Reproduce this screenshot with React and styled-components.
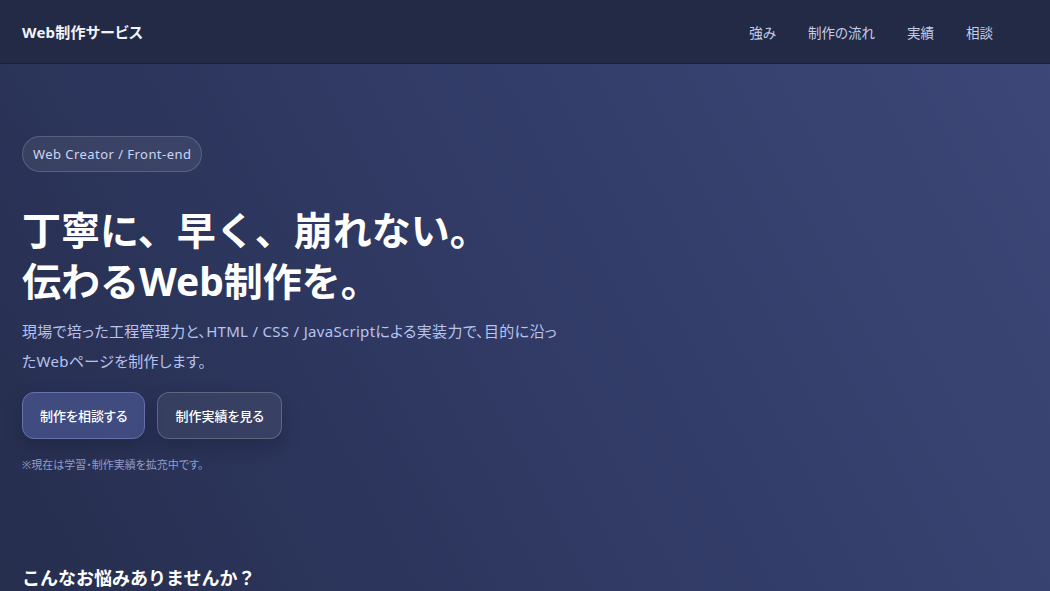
import React from "react";
import styled, { createGlobalStyle } from "styled-components";

const Global = createGlobalStyle`
  * { box-sizing: border-box; }
  html, body { margin: 0; padding: 0; }
  body {
    font-family: "Noto Sans", "Noto Sans CJK JP", sans-serif;
    font-feature-settings: "palt";
    color: #fff;
    background: #2f3862;
    overflow: hidden;
  }
`;

const Page = styled.div`
  min-height: 591px;
  background: linear-gradient(62deg, #262e4e 0%, #313b66 50%, #3d4879 100%);
`;

const Header = styled.header`
  height: 64px;
  display: flex;
  align-items: center;
  justify-content: space-between;
  padding: 0 57px 0 22px;
  background: #222a46;
  border-bottom: 1px solid rgba(0, 0, 0, 0.18);
`;

const Logo = styled.div`
  font-size: 15px;
  font-weight: 700;
  color: #f2f4fb;
  letter-spacing: 0.2px;
`;

const Nav = styled.nav`
  display: flex;
  gap: 32px;
`;

const NavLink = styled.a`
  font-size: 13.5px;
  color: #c6cde6;
  text-decoration: none;
`;

const Hero = styled.section`
  padding: 72px 22px 0;
  max-width: 600px;
`;

const Badge = styled.span`
  display: inline-flex;
  align-items: center;
  height: 36px;
  padding: 0 10px;
  border-radius: 18px;
  font-size: 13px;
  letter-spacing: 0.45px;
  color: #cdd5f3;
  background: rgba(255, 255, 255, 0.07);
  border: 1px solid rgba(255, 255, 255, 0.16);
`;

const Title = styled.h1`
  margin: 32px 0 0;
  font-size: 39px;
  line-height: 51px;
  font-weight: 700;
  font-feature-settings: normal;
  color: #ffffff;
`;

const Lead = styled.p`
  margin: 10px 0 0;
  max-width: 545px;
  font-size: 15px;
  line-height: 30px;
  letter-spacing: 0.3px;
  color: #b9c3ef;
`;

const Actions = styled.div`
  display: flex;
  gap: 12px;
  margin-top: 16px;
`;

const Button = styled.a`
  display: inline-flex;
  align-items: center;
  justify-content: center;
  height: 47px;
  padding: 0 17px;
  border-radius: 12px;
  font-size: 13px;
  font-weight: 500;
  color: #ffffff;
  text-decoration: none;
  background: ${(p) => (p.$primary ? "#404b80" : "rgba(255,255,255,0.06)")};
  border: 1px solid ${(p) => (p.$primary ? "#6772ad" : "rgba(255,255,255,0.2)")};
  box-shadow: 0 8px 18px rgba(10, 14, 35, 0.25);
`;

const Note = styled.p`
  margin: 17px 0 0;
  font-size: 11px;
  color: #929ccb;
`;

const Section = styled.section`
  padding: 92px 22px 0;
`;

const SectionTitle = styled.h2`
  margin: 0;
  font-size: 18px;
  font-weight: 700;
  font-feature-settings: normal;
  color: #ffffff;
`;

export default function App() {
  return (
    <>
      <Global />
      <Page>
        <Header>
          <Logo>Web制作サービス</Logo>
          <Nav>
            <NavLink href="#">強み</NavLink>
            <NavLink href="#">制作の流れ</NavLink>
            <NavLink href="#">実績</NavLink>
            <NavLink href="#">相談</NavLink>
          </Nav>
        </Header>
        <Hero>
          <Badge>Web Creator / Front-end</Badge>
          <Title>
            丁寧に、早く、崩れない。
            <br />
            伝わるWeb制作を。
          </Title>
          <Lead>
            現場で培った工程管理力と、HTML / CSS / JavaScriptによる実装力で、目的に沿ったWebページを制作します。
          </Lead>
          <Actions>
            <Button href="#" $primary>制作を相談する</Button>
            <Button href="#">制作実績を見る</Button>
          </Actions>
          <Note>※現在は学習・制作実績を拡充中です。</Note>
        </Hero>
        <Section>
          <SectionTitle>こんなお悩みありませんか？</SectionTitle>
        </Section>
      </Page>
    </>
  );
}
